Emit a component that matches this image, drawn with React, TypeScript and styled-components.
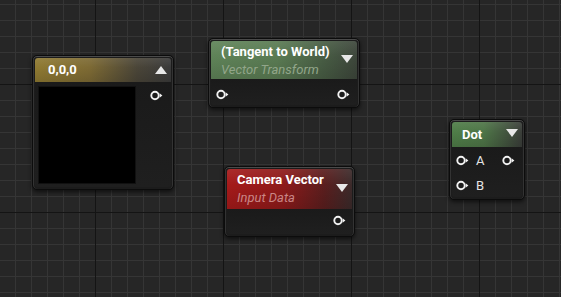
import React from 'react';
import styled, { createGlobalStyle } from 'styled-components';

const GlobalStyle = createGlobalStyle`
  html, body {
    margin: 0;
    padding: 0;
    background: #262626;
  }
  * {
    box-sizing: border-box;
  }
`;

type Tint = 'gold' | 'green' | 'red' | 'dot';

const headerColors: Record<Tint, string> = {
  gold: 'linear-gradient(90deg, #8f7a32 0%, #7d6a34 40%, #4a4538 75%, #3a3a3a 100%)',
  green: 'linear-gradient(90deg, #5f8358 0%, #5a7b53 45%, #495f45 75%, #3d463b 100%)',
  red: 'linear-gradient(90deg, #a51a1a 0%, #8e1a1a 45%, #5a1e1e 78%, #3b2a2a 100%)',
  dot: 'linear-gradient(90deg, #4f7d48 0%, #4e7547 45%, #43573f 75%, #3a3d39 100%)',
};

const subColors: Record<Tint, string> = {
  gold: '#b9ac86',
  green: '#92a68a',
  red: '#c98686',
  dot: '#92a68a',
};

const Canvas = styled.div`
  position: relative;
  width: 561px;
  height: 297px;
  overflow: hidden;
  background-color: #262626;
  background-image:
    linear-gradient(90deg, #141414 1px, transparent 1px),
    linear-gradient(0deg, #141414 1px, transparent 1px),
    linear-gradient(90deg, #353535 1px, transparent 1px),
    linear-gradient(0deg, #353535 1px, transparent 1px);
  background-size: 128px 128px, 128px 128px, 16px 16px, 16px 16px;
  background-position: 95px 0, 0 85px, 15px 0, 0 5px;
  font-family: Roboto, 'Liberation Sans', sans-serif;
`;

const Node = styled.div<{ $x: number; $y: number; $w: number; $h: number }>`
  position: absolute;
  left: ${(p) => p.$x}px;
  top: ${(p) => p.$y}px;
  width: ${(p) => p.$w}px;
  height: ${(p) => p.$h}px;
  display: flex;
  flex-direction: column;
  padding: 2px;
  border-radius: 5px;
  background: #1c1c1c;
  border: 1px solid #0c0c0c;
  box-shadow: inset 0 1px 0 #4a4a4a, inset 1px 0 0 #333, inset -1px 0 0 #333, 0 2px 4px rgba(0, 0, 0, 0.6);
`;

const Header = styled.div<{ $tint: Tint; $h: number }>`
  position: relative;
  height: ${(p) => p.$h}px;
  flex: none;
  display: flex;
  align-items: flex-start;
  justify-content: space-between;
  padding: 2px 4px 0 10px;
  border-radius: 3px 3px 0 0;
  background: ${(p) => headerColors[p.$tint]};
  &::after {
    content: '';
    position: absolute;
    inset: 0;
    border-radius: 3px 3px 0 0;
    background: linear-gradient(180deg, rgba(255, 255, 255, 0.08) 0%, rgba(0, 0, 0, 0) 40%, rgba(0, 0, 0, 0.12) 100%);
    pointer-events: none;
  }
`;

const Titles = styled.div`
  display: flex;
  flex-direction: column;
  gap: 2px;
  position: relative;
  z-index: 1;
`;

const Title = styled.span`
  color: #ffffff;
  font-size: 13px;
  font-weight: 700;
  line-height: 17px;
  white-space: nowrap;
`;

const Subtitle = styled.span<{ $tint: Tint }>`
  color: ${(p) => subColors[p.$tint]};
  font-size: 13px;
  font-style: italic;
  line-height: 15px;
  white-space: nowrap;
`;

const Toggle = styled.span<{ $up?: boolean; $top: number }>`
  position: relative;
  z-index: 1;
  margin-top: ${(p) => p.$top}px;
  width: 0;
  height: 0;
  border-left: 6px solid transparent;
  border-right: 6px solid transparent;
  ${(p) => (p.$up ? 'border-bottom: 8px solid #e8e8e8;' : 'border-top: 8px solid #e8e8e8;')}
`;

const Body = styled.div<{ $end?: boolean }>`
  flex: 1;
  display: flex;
  justify-content: ${(p) => (p.$end ? 'flex-end' : 'space-between')};
  background: linear-gradient(180deg, #1a1a1a 0%, #1f1f1f 100%);
  border-radius: 0 0 3px 3px;
`;

const PinColumn = styled.div<{ $pad: string; $gap: number }>`
  display: flex;
  flex-direction: column;
  gap: ${(p) => p.$gap}px;
  padding: ${(p) => p.$pad};
`;

const PinRow = styled.div`
  display: flex;
  align-items: center;
  gap: 7px;
  height: 14px;
  color: #e4e4e4;
  font-size: 13px;
`;

const Preview = styled.div`
  width: 96px;
  height: 96px;
  margin: 5px 0 0 4px;
  background: #000;
  box-shadow: 0 0 0 1px #111;
`;

const Pin: React.FC = () => (
  <svg width="13" height="11" viewBox="0 0 13 11">
    <circle cx="5" cy="5.5" r="3.7" fill="none" stroke="#f2f2f2" strokeWidth="1.9" />
    <path d="M9.6 3.2 L12.4 5.5 L9.6 7.8 Z" fill="#f2f2f2" />
  </svg>
);

export default function App() {
  return (
    <>
      <GlobalStyle />
      <Canvas>
        <Node $x={32} $y={55} $w={142} $h={135}>
          <Header $tint="gold" $h={24}>
            <Titles>
              <Title style={{ marginTop: 1, marginLeft: 3 }}>0,0,0</Title>
            </Titles>
            <Toggle $up $top={6} />
          </Header>
          <Body>
            <Preview />
            <PinColumn $pad="6px 8px 0 0" $gap={0}>
              <PinRow>
                <Pin />
              </PinRow>
            </PinColumn>
          </Body>
        </Node>

        <Node $x={208} $y={38} $w={152} $h={70}>
          <Header $tint="green" $h={38}>
            <Titles>
              <Title>(Tangent to World)</Title>
              <Subtitle $tint="green">Vector Transform</Subtitle>
            </Titles>
            <Toggle $top={12} />
          </Header>
          <Body>
            <PinColumn $pad="8px 0 0 5px" $gap={0}>
              <PinRow>
                <Pin />
              </PinRow>
            </PinColumn>
            <PinColumn $pad="8px 7px 0 0" $gap={0}>
              <PinRow>
                <Pin />
              </PinRow>
            </PinColumn>
          </Body>
        </Node>

        <Node $x={224} $y={166} $w={131} $h={71}>
          <Header $tint="red" $h={40}>
            <Titles>
              <Title>Camera Vector</Title>
              <Subtitle $tint="red">Input Data</Subtitle>
            </Titles>
            <Toggle $top={13} />
          </Header>
          <Body $end>
            <PinColumn $pad="4px 6px 0 0" $gap={0}>
              <PinRow>
                <Pin />
              </PinRow>
            </PinColumn>
          </Body>
        </Node>

        <Node $x={449} $y={119} $w={76} $h={81}>
          <Header $tint="dot" $h={25}>
            <Titles>
              <Title style={{ marginTop: 2 }}>Dot</Title>
            </Titles>
            <Toggle $top={5} />
          </Header>
          <Body>
            <PinColumn $pad="6px 0 0 4px" $gap={11}>
              <PinRow>
                <Pin />
                <span>A</span>
              </PinRow>
              <PinRow>
                <Pin />
                <span>B</span>
              </PinRow>
            </PinColumn>
            <PinColumn $pad="6px 7px 0 0" $gap={0}>
              <PinRow>
                <Pin />
              </PinRow>
            </PinColumn>
          </Body>
        </Node>
      </Canvas>
    </>
  );
}
